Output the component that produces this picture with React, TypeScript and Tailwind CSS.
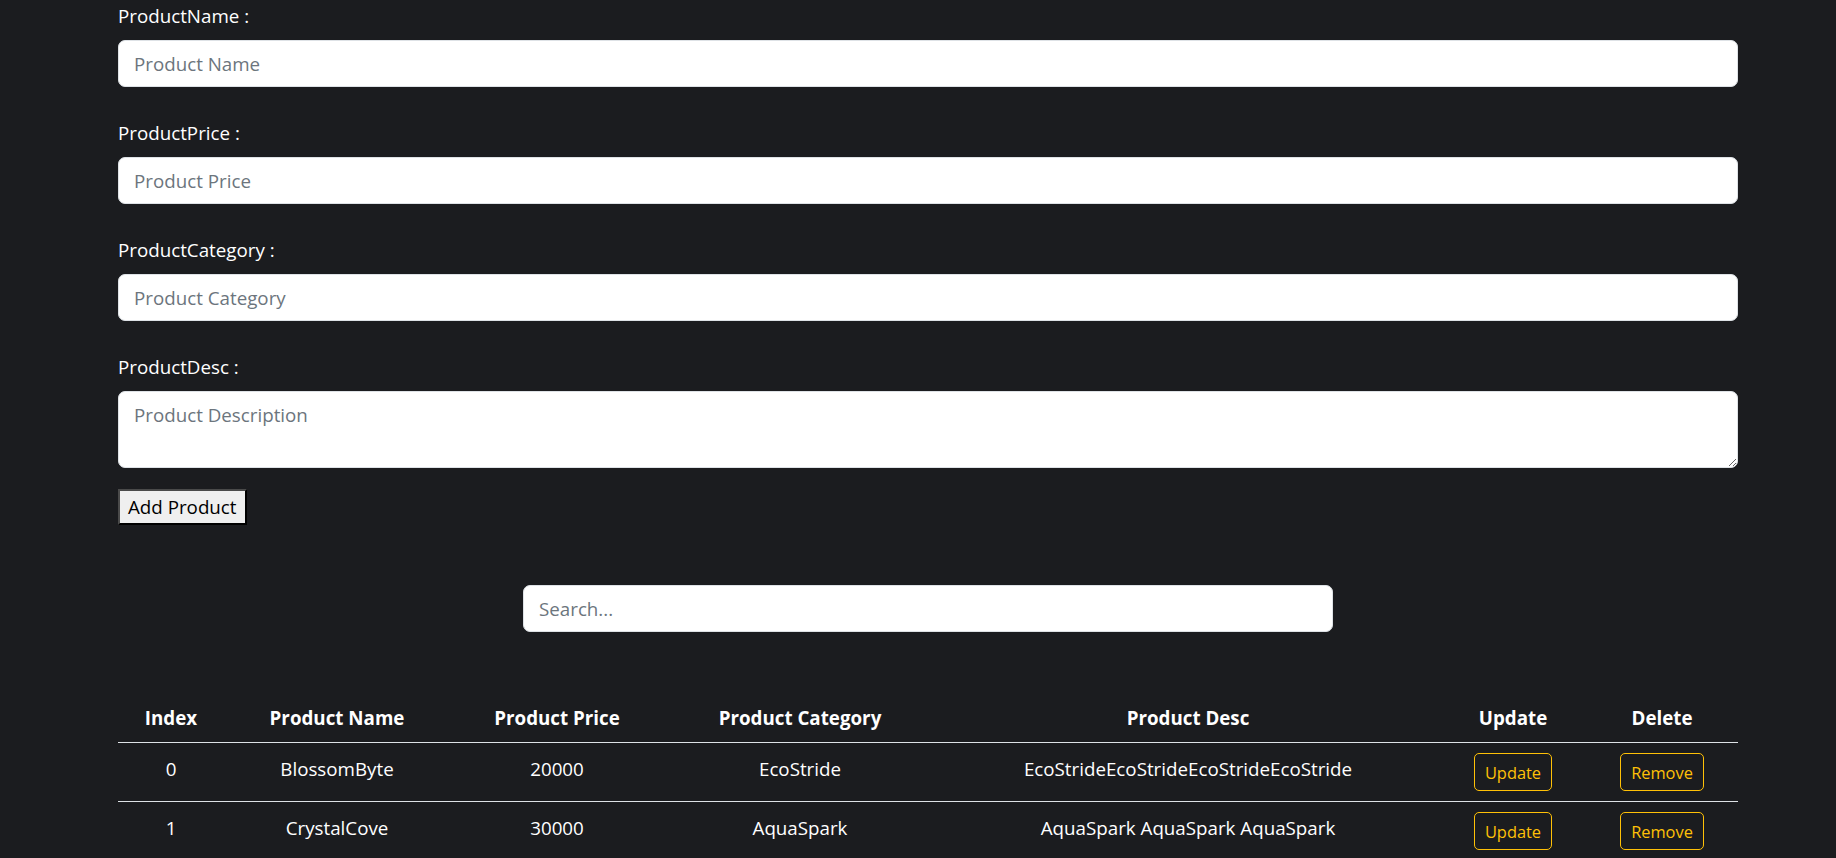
import React from "react";

type Product = { name: string; price: number; category: string; desc: string };

const products: Product[] = [
  { name: "BlossomByte", price: 20000, category: "EcoStride", desc: "EcoStrideEcoStrideEcoStrideEcoStride" },
  { name: "CrystalCove", price: 30000, category: "AquaSpark", desc: "AquaSpark AquaSpark AquaSpark" },
];

const inputCls =
  "block h-[47px] w-full rounded-[7px] border border-[#dee2e6] bg-white px-[15px] text-[18.75px] leading-[28px] text-[#212529] outline-none placeholder:text-[#6c757d]";

function Field({ label, placeholder, first }: { label: string; placeholder: string; first?: boolean }) {
  return (
    <div className={first ? "" : "mt-[32px]"}>
      <label className="mb-[10px] block leading-[28px] text-white">{label}</label>
      <input className={inputCls} placeholder={placeholder} />
    </div>
  );
}

export default function App() {
  return (
    <div className="min-h-screen bg-[#1b1c1f] font-['Open_Sans',sans-serif] text-[18.75px] leading-[28px] text-white">
      <div className="ml-[118px] w-[1620px] pt-[2px]">
        {/* Add product form */}
        <Field label="ProductName :" placeholder="Product Name" first />
        <Field label="ProductPrice :" placeholder="Product Price" />
        <Field label="ProductCategory :" placeholder="Product Category" />
        <div className="mt-[32px]">
          <label className="mb-[10px] block leading-[28px] text-white">ProductDesc :</label>
          <textarea
            className="block h-[77px] w-full rounded-[7px] border border-[#dee2e6] bg-white px-[15px] py-[9px] text-[18.75px] leading-[28px] text-[#212529] outline-none placeholder:text-[#6c757d]"
            placeholder="Product Description"
          />
        </div>
        <button className="mt-[21px] block h-[36px] border-2 border-solid border-t-[#4a4a4a] border-l-[#4a4a4a] border-r-black border-b-black bg-[#efefef] px-[8px] text-[18.75px] leading-[28px] text-black">
          Add Product
        </button>

        {/* Search */}
        <div className="mt-[60px] flex justify-center">
          <input
            className="block h-[47px] w-[810px] rounded-[7px] border border-[#dee2e6] bg-white px-[15px] text-[18.75px] leading-[28px] text-[#212529] outline-none placeholder:text-[#6c757d]"
            placeholder="Search..."
          />
        </div>

        {/* Product table */}
        <table className="mt-[63px] w-[1620px] table-fixed border-collapse text-center">
          <colgroup>
            <col className="w-[106px]" />
            <col className="w-[226px]" />
            <col className="w-[214px]" />
            <col className="w-[272px]" />
            <col className="w-[504px]" />
            <col className="w-[146px]" />
            <col className="w-[152px]" />
          </colgroup>
          <thead>
            <tr className="border-b border-[#dee2e6]">
              {["Index", "Product Name", "Product Price", "Product Category", "Product Desc", "Update", "Delete"].map((h) => (
                <th key={h} className="px-[9px] pt-[8.5px] pb-[10.5px] font-bold">
                  {h}
                </th>
              ))}
            </tr>
          </thead>
          <tbody>
            {products.map((p, i) => (
              <tr key={p.name} className="border-b border-[#dee2e6]">
                <td className="px-[9px] pt-[12px] align-top">{i}</td>
                <td className="px-[9px] pt-[12px] align-top">{p.name}</td>
                <td className="px-[9px] pt-[12px] align-top">{p.price}</td>
                <td className="px-[9px] pt-[12px] align-top">{p.category}</td>
                <td className="px-[9px] pt-[12px] align-top">{p.desc}</td>
                <td className="px-[9px] py-[10px] align-top">
                  <button className="rounded-[5px] border border-[#ffc107] px-[10px] py-[5.5px] text-[16.4px] leading-[25px] text-[#ffc107]">
                    Update
                  </button>
                </td>
                <td className="px-[9px] py-[10px] align-top">
                  <button className="rounded-[5px] border border-[#ffc107] px-[10px] py-[5.5px] text-[16.4px] leading-[25px] text-[#ffc107]">
                    Remove
                  </button>
                </td>
              </tr>
            ))}
          </tbody>
        </table>
      </div>
    </div>
  );
}
